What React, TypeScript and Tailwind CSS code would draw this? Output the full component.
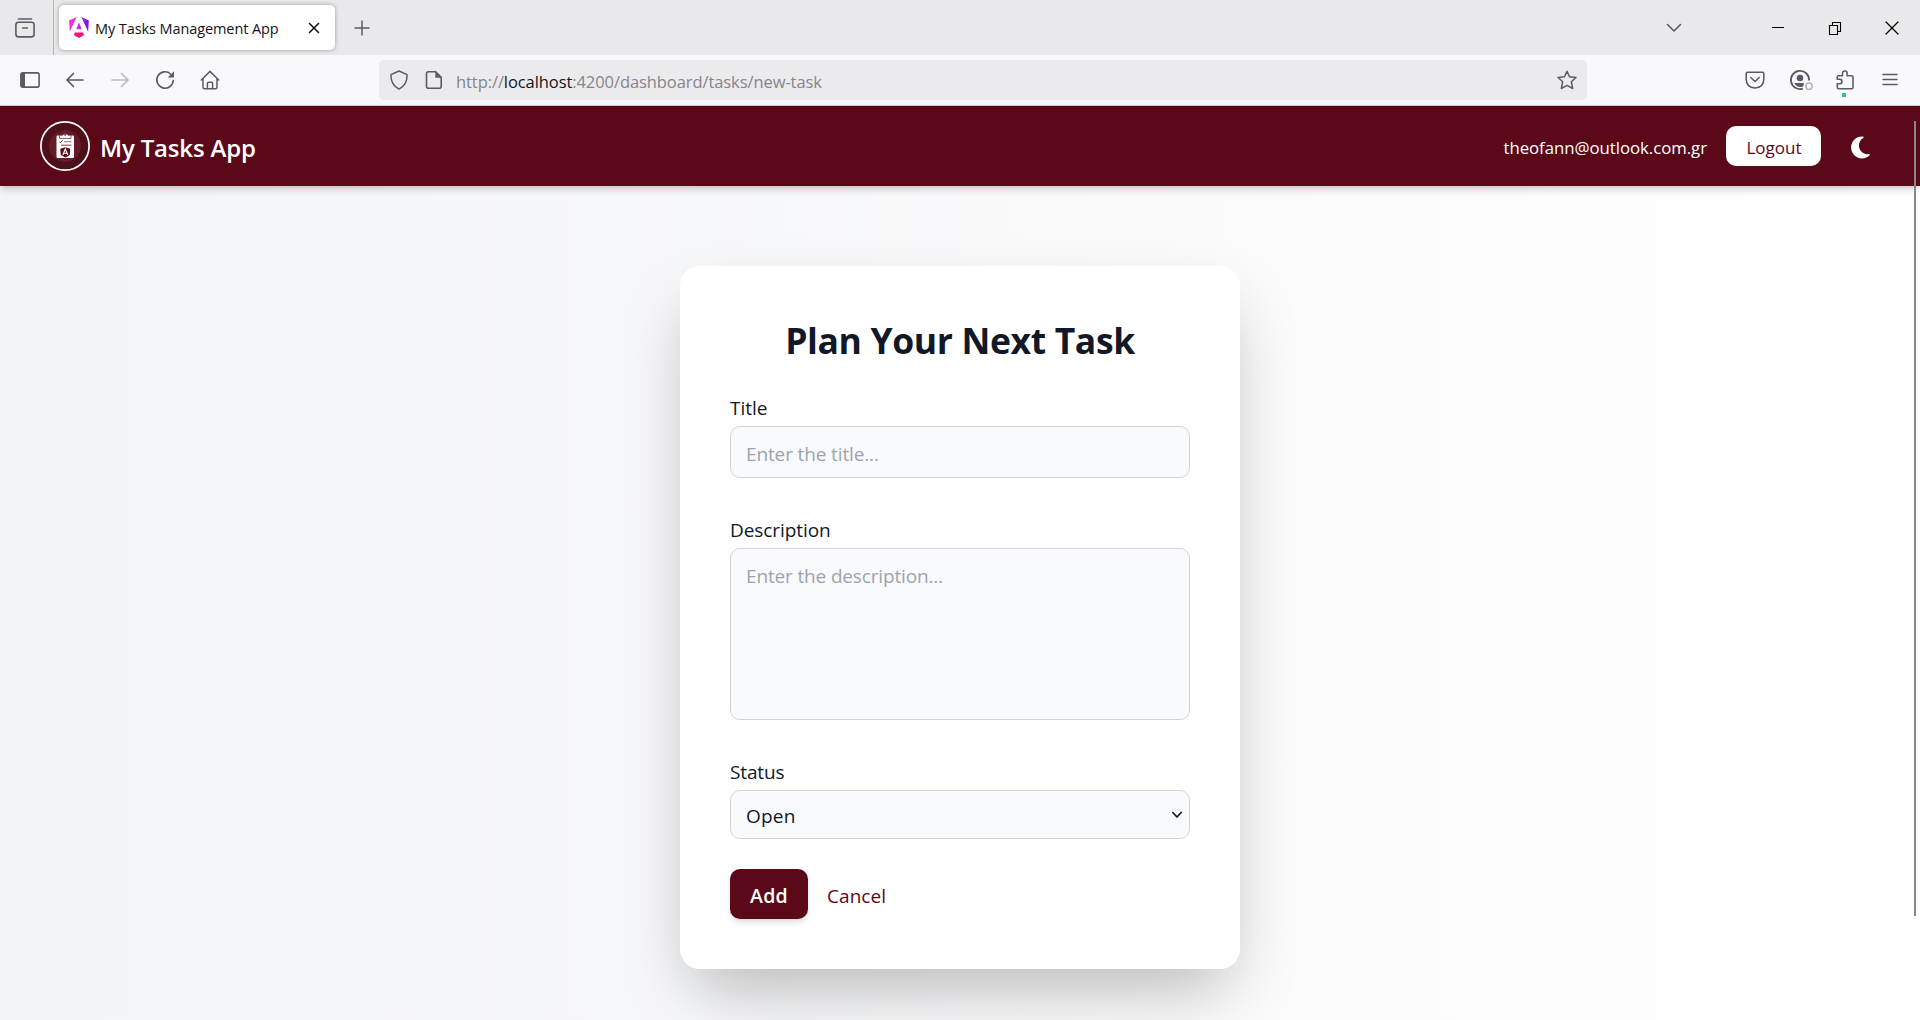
import type { ReactNode } from 'react';

function Glyph({ children, size = 20, className = '' }: { children: ReactNode; size?: number; className?: string }) {
  return (
    <svg
      width={size}
      height={size}
      viewBox={`0 0 ${size} ${size}`}
      fill="none"
      stroke="currentColor"
      strokeWidth="1.6"
      strokeLinecap="round"
      strokeLinejoin="round"
      className={`shrink-0 ${className}`}
    >
      {children}
    </svg>
  );
}

function ToolButton({ children, className = '' }: { children: ReactNode; className?: string }) {
  return <button className={`relative flex h-full w-[45px] items-center justify-center text-[#5b5b66] ${className}`}>{children}</button>;
}

function AngularLogo() {
  return (
    <svg width="20" height="21" viewBox="0 0 223 236" className="shrink-0">
      <defs>
        <linearGradient id="wings" x1="0" y1="0" x2="1" y2="0">
          <stop offset="0" stopColor="#ff30d0" />
          <stop offset="0.4" stopColor="#e22be0" />
          <stop offset="1" stopColor="#6a11f5" />
        </linearGradient>
      </defs>
      <path
        fill="url(#wings)"
        d="m222.077 39.192-8.019 125.923L137.387 0l84.69 39.192zM111.039 62.675l30.357 73.803H80.681l30.358-73.803zM7.937 165.115 0 39.192 84.69 0 7.937 165.115z"
      />
      <path fill="#f8116f" d="m168.972 202.017-57.933 33.056-57.934-33.056 11.783-28.556h92.301l11.783 28.556z" />
    </svg>
  );
}

function TabStrip() {
  return (
    <div className="flex h-[55px] items-center bg-[#e9e9eb]">
      <div className="flex h-full w-[54px] items-center border-r border-[#b4b4b8] pl-[15px] text-[#5b5b66]">
        <Glyph>
          <path d="M3.5 1h13" />
          <rect x="0.9" y="4.3" width="18.2" height="14.6" rx="2.6" />
          <path d="M7.6 10h4.8" />
        </Glyph>
      </div>
      <div className="ml-[5px] flex h-[45px] w-[276px] items-center rounded-[5px] bg-white pr-[15px] pl-[10px] shadow-[0_0_4px_rgba(0,0,0,0.35)]">
        <AngularLogo />
        <span className="ml-[6px] pt-[2px] text-[14.5px] tracking-[-0.09px] whitespace-nowrap text-[#15141a]">My Tasks Management App</span>
        <Glyph size={12} className="ml-auto text-[#15141a]">
          <path d="M1.5 1.5l9 9M10.5 1.5l-9 9" />
        </Glyph>
      </div>
      <Glyph size={16} className="ml-[19px] text-[#5b5b66]">
        <path d="M8 1v14M1 8h14" strokeWidth="1.5" />
      </Glyph>
      <div className="ml-auto flex h-full items-center">
        <Glyph size={16} className="mr-[67px] text-[#5b5b66]">
          <path d="M1.5 4.5L8 11l6.500-6.500" />
        </Glyph>
        <button className="flex h-full w-[57px] items-center justify-center text-black">
          <Glyph size={14}>
            <path d="M1 6h12" strokeWidth="1" strokeLinecap="butt" shapeRendering="crispEdges" />
          </Glyph>
        </button>
        <button className="flex h-full w-[57px] items-center justify-center text-black">
          <Glyph size={14}>
            <path d="M1.500 4.500h8v9h-8zM4.500 4.500v-3h8v9h-3" strokeWidth="1.100" strokeLinejoin="miter" strokeLinecap="butt" />
          </Glyph>
        </button>
        <button className="flex h-full w-[57px] items-center justify-center text-black">
          <Glyph size={14}>
            <path d="M1 1l12 12M13 1L1 13" strokeWidth="1.2" />
          </Glyph>
        </button>
      </div>
    </div>
  );
}

function NavBar() {
  return (
    <div className="flex h-[51px] items-center border-b border-[#d0d0d4] bg-[#f9f9fb]">
      <div className="flex h-full w-[379px] pl-[7px]">
        <ToolButton>
          <Glyph>
            <rect x="0.9" y="2.900" width="18.200" height="14.200" rx="1.800" />
            <path d="M1 4.500Q1 3 2.500 3H5v14H2.500Q1 17 1 15.500z" fill="currentColor" stroke="none" />
          </Glyph>
        </ToolButton>
        <ToolButton>
          <Glyph>
            <path d="M18 10H2M8.500 3.500L2 10l6.500 6.500" strokeWidth="1.700" />
          </Glyph>
        </ToolButton>
        <ToolButton>
          <Glyph className="text-[#b9b9bf]">
            <path d="M2 10h16M11.500 3.500L18 10l-6.500 6.500" strokeWidth="1.700" />
          </Glyph>
        </ToolButton>
        <ToolButton>
          <Glyph>
            <path d="M18.200 10.500A8.200 8.200 0 1 1 15.600 4" />
            <path d="M19 1.200v6.300h-6.300z" fill="currentColor" stroke="none" />
          </Glyph>
        </ToolButton>
        <ToolButton>
          <Glyph>
            <path d="M1.300 10L10 1.400 18.700 10M3 8.500v8.700q0 1.600 1.600 1.600h10.800q1.600 0 1.600-1.600V8.500" strokeWidth="1.500" />
            <path d="M7.400 18.500v-5q0-1.300 1.300-1.300h2.600q1.300 0 1.300 1.300v5" strokeWidth="1.500" />
          </Glyph>
        </ToolButton>
      </div>
      <div className="flex h-[40px] w-[1208px] items-center rounded-[5px] bg-[#ebebed] px-[10px] text-[#5b5b66]">
        <Glyph>
          <path d="M10 1L18 4.600Q18.500 14.500 10 19.200 1.500 14.500 2 4.600z" strokeWidth="1.500" />
        </Glyph>
        <Glyph className="ml-[15px]">
          <path d="M4.500 1.800h7.200l5.500 5.500v8.900q0 2-2 2H4.500q-2 0-2-2V3.800q0-2 2-2z" />
          <path d="M11.300 1.800v5.900h6z" fill="currentColor" stroke="none" />
        </Glyph>
        <div className="ml-[12px] pt-[4px] text-[16.5px] tracking-[-0.08px] whitespace-nowrap text-[#85858c]">
          http://<span className="text-[#15141a]">localhost</span>:4200/dashboard/tasks/new-task
        </div>
        <Glyph className="ml-auto">
          <path d="M10 1.200l2.500 5.600 6.500.7-4.700 4.200 1.400 6.800L10 15.400l-5.700 3.100 1.400-6.800L1 7.500l6.500-.7z" strokeWidth="1.500" />
        </Glyph>
      </div>
      <div className="ml-auto flex h-full pr-[8px]">
        <ToolButton>
          <Glyph>
            <path d="M2.600 2.300h14.800q1.400 0 1.400 1.400v5.500q0 8-8.800 8.800Q1.200 17.200 1.200 9.200V3.700q0-1.400 1.400-1.400z" />
            <path d="M5.800 7.500L10 11.500l4.200-4" />
          </Glyph>
        </ToolButton>
        <ToolButton>
          <Glyph className="overflow-visible">
            <path d="M19.100 10.500A9.100 9.100 0 1 0 12.800 18.600" strokeWidth="1.800" strokeLinecap="butt" />
            <circle cx="10" cy="8" r="3.300" fill="currentColor" stroke="none" />
            <path d="M4.300 13h9.700l-.8 3.500Q7 18.500 4.300 13z" fill="currentColor" stroke="none" />
            <circle cx="19" cy="16.300" r="3.200" stroke="#b4b4ba" strokeWidth="1.500" />
          </Glyph>
        </ToolButton>
        <ToolButton>
          <Glyph>
            <path d="M3.300 5.800h4.200V3.300a2.300 2.300 0 0 1 4.600 0v2.500h4.400q1.500 0 1.500 1.500v10q0 1.500-1.500 1.500H3.800q-1.500 0-1.500-1.500v-3.500h2.400a2.300 2.300 0 0 0 0-4.600H2.300V7q0-1.200 1-1.200z" />
          </Glyph>
          <span className="absolute top-[38px] left-[20px] size-[4px] bg-[#2ac3a2]" />
        </ToolButton>
        <ToolButton>
          <Glyph>
            <path d="M3 4.500h14M3 9.500h14M3 14.500h14" strokeWidth="1.500" />
          </Glyph>
        </ToolButton>
      </div>
    </div>
  );
}

function AppLogo() {
  return (
    <svg width="50" height="50" viewBox="0 0 50 50" className="shrink-0">
      <circle cx="25" cy="25" r="24.100" fill="#4f0f1a" stroke="#fff" strokeWidth="1.700" />
      <circle cx="25" cy="25" r="16" fill="#651b28" />
      <rect x="16.500" y="14.500" width="17.500" height="22.500" rx="1.200" fill="#fff" />
      <path d="M19.500 17.500v-3.200h3a3 3 0 0 1 5.500 0h3v3.200z" fill="#fff" stroke="#651b28" strokeWidth="0.700" />
      <circle cx="25.200" cy="13.800" r="1" fill="#651b28" />
      <path d="M19.300 20.600l1 1 2.300-2.300" fill="none" stroke="#651b28" strokeWidth="1" />
      <path d="M24 20.700h7.500" stroke="#9c6c75" strokeWidth="1" />
      <path d="M21 24.200h10.500" stroke="#7c414c" strokeWidth="1" />
      <path d="M20.300 27.800l5-1.500 5 1.500-.5 6.200-4.500 2.400-4.500-2.400z" fill="#5b0a19" />
      <path d="M22.800 34l2.500-6 2.500 6M23.800 32.300h3" fill="none" stroke="#fff" strokeWidth="1.100" />
    </svg>
  );
}

function AppHeader() {
  return (
    <header className="relative flex h-[80px] items-center bg-[#5b0919] pr-[50px] pl-[40px] text-white shadow-[0_5px_8px_-1px_rgba(0,0,0,0.13),0_3px_5px_-2px_rgba(0,0,0,0.12)]">
      <AppLogo />
      <span className="ml-[10px] pt-[3px] text-[24px] font-semibold tracking-[-0.17px]">My Tasks App</span>
      <span className="ml-auto pt-[3px] text-[16.8px] tracking-[-0.04px]">theofann@outlook.com.gr</span>
      <button className="ml-[19px] flex h-[40px] w-[95px] items-center justify-center rounded-[10px] bg-white pt-[3px] pl-px text-[17px] text-[#5b0919]">
        Logout
      </button>
      <svg width="19" height="25" viewBox="0 0 384 512" fill="currentColor" className="mt-[3px] ml-[30px] shrink-0">
        <path d="M223.500 32C100 32 0 132.300 0 256S100 480 223.500 480c60.600 0 115.500-24.200 155.800-63.400c5-4.900 6.300-12.500 3.100-18.700s-10.100-9.700-17-8.500c-9.800 1.700-19.800 2.600-30.100 2.600c-96.900 0-175.500-78.800-175.500-176c0-65.800 36-123.100 89.300-153.300c6.100-3.500 9.200-10.500 7.700-17.300s-7.300-11.900-14.300-12.500c-6.300-.5-12.600-.8-19-.8z" />
      </svg>
    </header>
  );
}

const label = 'block h-[30px] pt-[3px] text-[19px] leading-[28px]';
const field = 'mt-[5px] block w-full rounded-[10px] border border-[#d1d5db] bg-[#f9fafc] pl-[15px] text-[19px] outline-none placeholder:text-[#9ca3af]';

function TaskForm() {
  return (
    <form className="h-[703px] w-[560px] rounded-[20px] bg-white p-[50px] text-gray-900 shadow-[0_31px_68px_-13px_rgba(0,0,0,0.27)]">
      <h1 className="mb-[30px] h-[45px] pt-[3px] text-center text-[35.500px] leading-[42px] font-bold tracking-[-0.36px] whitespace-nowrap text-[#111827]">
        Plan Your Next Task
      </h1>
      <label className={label}>Title</label>
      <input className={`${field} h-[52px] pt-[3px] tracking-[-0.13px]`} placeholder="Enter the title..." />
      <label className={`${label} mt-[35px] tracking-[-0.08px]`}>Description</label>
      <textarea className={`${field} h-[172px] resize-none pt-[12px] leading-[30px] tracking-[-0.15px]`} placeholder="Enter the description..." />
      <label className={`${label} mt-[35px] tracking-[-0.15px]`}>Status</label>
      <div className="relative">
        <select className={`${field} h-[49px] appearance-none pt-[4px] tracking-[0.2px]`} defaultValue="Open">
          <option>Open</option>
        </select>
        <Glyph size={12} className="pointer-events-none absolute top-[19px] right-[7px]">
          <path d="M1.800 3.500L6 8l4.200-4.500" strokeWidth="1.700" />
        </Glyph>
      </div>
      <div className="mt-[30px] flex h-[50px] items-center gap-[19px]">
        <button
          type="button"
          className="flex h-full w-[78px] items-center justify-center rounded-[10px] bg-[#5b0919] pt-[3px] text-[19.500px] font-semibold tracking-[0.2px] text-white shadow-[0_5px_7px_-1px_rgba(0,0,0,0.1),0_2px_5px_-2px_rgba(0,0,0,0.1)]"
        >
          Add
        </button>
        <a className="pt-[4px] text-[19px] tracking-[0.05px] text-[#5b0919]">Cancel</a>
      </div>
    </form>
  );
}

export default function App() {
  return (
    <div className="relative flex h-[1020px] w-full flex-col overflow-hidden font-['Open_Sans',sans-serif]">
      <TabStrip />
      <NavBar />
      <AppHeader />
      <main className="flex flex-1 justify-center bg-linear-to-r from-gray-100 to-white pt-[80px]">
        <TaskForm />
      </main>
      <div className="absolute top-[121px] right-[4px] h-[795px] w-[2px] bg-[#868686]" />
    </div>
  );
}
